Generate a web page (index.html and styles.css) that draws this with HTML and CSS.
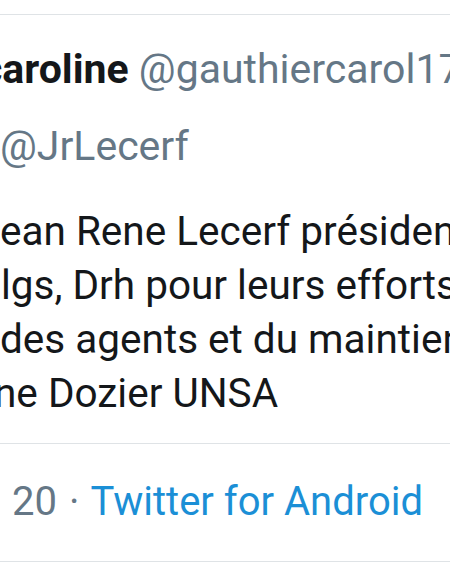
FILE: index.html
```html
<!DOCTYPE html>
<html lang="fr">
<head>
<meta charset="utf-8">
<link rel="stylesheet" href="styles.css">
</head>
<body>
<div class="tweet">
  <hr class="rule rule-top">
  <div class="header">
    <div class="names"><span class="name">caroline</span> <span class="handle">@gauthiercarol17</span></div>
    <div class="reply">@JrLecerf</div>
  </div>
  <div class="body">
    <span class="line">ean Rene Lecerf président</span>
    <span class="line l2">lgs, Drh pour leurs efforts</span>
    <span class="line">des agents et du maintien</span>
    <span class="line l4">ne Dozier UNSA</span>
  </div>
  <hr class="rule">
  <div class="meta"><span class="time">20</span><span class="dot">·</span><span class="source">Twitter for Android</span></div>
  <hr class="rule">
</div>
</body>
</html>
```
FILE: styles.css
```css
html, body {
  margin: 0;
  padding: 0;
  background: #ffffff;
}
.tweet {
  width: 450px;
  height: 567px;
  overflow: hidden;
  font-family: Roboto, "Noto Sans", sans-serif;
  color: #14171a;
  padding-top: 14px;
  box-sizing: border-box;
}
.rule {
  border: 0;
  height: 1px;
  background: #dfe3e6;
  margin: 0;
}
.header {
  padding-top: 29px;
  white-space: nowrap;
}
.names {
  font-size: 41px;
  line-height: 50px;
  margin-left: -19px;
}
.name {
  font-weight: 700;
  color: #14171a;
}
.handle {
  color: #657786;
}
.reply {
  font-size: 41px;
  line-height: 50px;
  margin-top: 27px;
  color: #657786;
}
.body {
  padding-top: 33px;
  padding-bottom: 23px;
  font-size: 40.5px;
  line-height: 54px;
  white-space: nowrap;
}
.line {
  display: block;
}
.l2 {
  margin-left: 1px;
}
.l4 {
  margin-left: -6px;
}
.meta {
  font-size: 40px;
  line-height: 50px;
  padding: 33px 0 34px 12px;
  white-space: nowrap;
}
.time, .dot {
  color: #657786;
}
.dot {
  margin: 0 11px 0 12px;
}
.source {
  color: #1b8fd6;
}
```
